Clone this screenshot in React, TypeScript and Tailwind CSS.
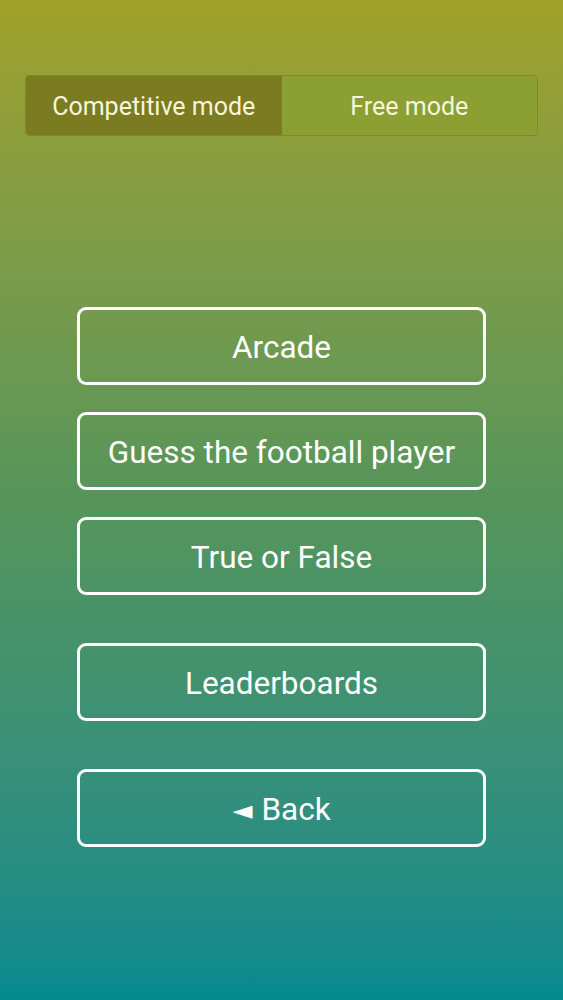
import React from "react";

function Btn({ children, className = "" }: { children: React.ReactNode; className?: string }) {
  return (
    <button
      className={
        "h-[78px] w-full rounded-[9px] border-[3px] border-white text-white text-[31.5px] leading-none pt-[4px] flex items-center justify-center " +
        className
      }
    >
      {children}
    </button>
  );
}

export default function App() {
  return (
    <div
      className="w-[563px] h-[1000px] bg-gradient-to-b from-[#a0a128] via-[#55955a] to-[#028a8f] flex flex-col"
      style={{ fontFamily: "Roboto, 'Noto Sans', sans-serif" }}
    >
      <div className="mt-[75px] mx-[25px] h-[61px] flex rounded-[4px] border border-[#7f8a22] overflow-hidden">
        <div className="flex-1 bg-[#7b7c22] text-[#f7f5dc] text-[25px] pt-[3px] flex items-center justify-center">
          Competitive mode
        </div>
        <div className="flex-1 bg-[#8c9f33] text-[#f7f5dc] text-[25px] pt-[3px] flex items-center justify-center">
          Free mode
        </div>
      </div>
      <div className="mt-[171px] mx-[77px] flex flex-col">
        <Btn>Arcade</Btn>
        <Btn className="mt-[27px]">Guess the football player</Btn>
        <Btn className="mt-[27px]">True or False</Btn>
        <Btn className="mt-[48px]">Leaderboards</Btn>
        <Btn className="mt-[48px]">
          <span className="text-[26px] mr-[9px]" style={{ fontFamily: "'DejaVu Sans', sans-serif" }}>◄</span>Back
        </Btn>
      </div>
    </div>
  );
}
